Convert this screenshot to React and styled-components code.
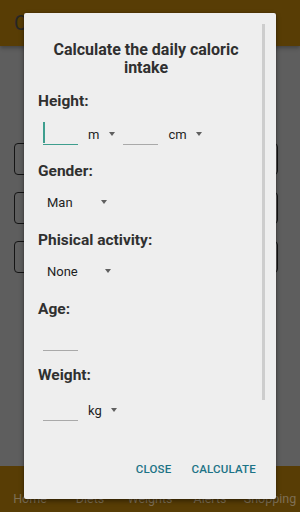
import React from 'react'
import styled, { createGlobalStyle } from 'styled-components'

const GlobalStyle = createGlobalStyle`
  html, body { margin: 0; padding: 0; }
  body { font-family: Roboto, "Noto Sans", sans-serif; background: #5e5e5e; }
  #root { width: 300px; height: 512px; }
`

const Screen = styled.div`
  position: relative;
  width: 300px;
  height: 512px;
  display: flex;
  flex-direction: column;
  background: #5e5e5e;
  overflow: hidden;
`

const AppBar = styled.div`
  height: 46px;
  flex: none;
  display: flex;
  align-items: center;
  padding-left: 14px;
  background: #583d05;
  color: #262626;
  font-size: 20px;
  box-shadow: 0 2px 4px rgba(0, 0, 0, 0.3);
`

const Content = styled.div`
  flex: 1;
  display: flex;
  flex-direction: column;
  gap: 17px;
  padding: 97px 22px 0 14px;
`

const OutlineBox = styled.div`
  height: 30px;
  border: 1.5px solid #151515;
  border-radius: 4px;
`

const BottomNav = styled.div`
  height: 46px;
  flex: none;
  display: grid;
  grid-template-columns: repeat(5, 1fr);
  background: #583d05;
`

const NavItem = styled.div`
  display: flex;
  align-items: flex-end;
  justify-content: center;
  padding-bottom: 6px;
  font-size: 12.5px;
  color: #7e6f55;
`

const Dialog = styled.div`
  position: absolute;
  left: 24px;
  top: 13px;
  width: 252px;
  height: 486px;
  background: #eeeeee;
  border-radius: 2px;
  box-shadow: 0 2px 5px rgba(0, 0, 0, 0.45), 0 0 1px rgba(40, 0, 0, 0.6);
  display: flex;
  flex-direction: column;
`

const ScrollThumb = styled.div`
  position: absolute;
  left: 238px;
  top: 11px;
  width: 3px;
  height: 376px;
  background: #cdcdcd;
`

const Body = styled.div`
  flex: 1;
  padding: 28px 22px 0 14px;
`

const Title = styled.div`
  font-size: 16px;
  line-height: 18px;
  font-weight: 700;
  color: #303030;
  text-align: center;
`

const Label = styled.div`
  margin-top: ${p => p.$top}px;
  font-size: 15.5px;
  line-height: 18px;
  font-weight: 700;
  color: #303030;
`

const Row = styled.div`
  display: flex;
  align-items: flex-start;
  height: 30px;
  margin-top: ${p => p.$top}px;
  padding-left: ${p => p.$indent || 5}px;
`

const Input = styled.div`
  position: relative;
  width: 35px;
  height: 25px;
  border-bottom: 1px solid ${p => (p.$focused ? '#3e9e8e' : '#a9a9a9')};
  flex: none;
`

const Caret = styled.div`
  position: absolute;
  left: 0;
  top: 3px;
  width: 1.5px;
  height: 21px;
  background: #3e9e8e;
`

const Spinner = styled.div`
  display: flex;
  align-items: center;
  height: 30px;
  padding-left: ${p => p.$pad}px;
  font-size: 13px;
  color: #1e1e1e;
`

const Arrow = styled.span`
  margin-left: ${p => p.$gap}px;
  margin-right: 8px;
  width: 0;
  height: 0;
  border-left: 3.5px solid transparent;
  border-right: 3.5px solid transparent;
  border-top: 4.5px solid #5f5f5f;
`

const Actions = styled.div`
  display: flex;
  justify-content: flex-end;
  gap: 4px;
  padding: 0 12px 17px 0;
`

const TextButton = styled.button`
  border: none;
  background: none;
  padding: 6px 8px;
  font-family: Roboto, sans-serif;
  font-size: 11.5px;
  font-weight: 500;
  letter-spacing: 0.2px;
  color: #1c7386;
  text-transform: uppercase;
`

const App = () => {
  return (
    <>
      <GlobalStyle />
      <Screen>
        <AppBar>Calories</AppBar>
        <Content>
          <OutlineBox />
          <OutlineBox />
          <OutlineBox />
        </Content>
        <BottomNav>
          <NavItem>Home</NavItem>
          <NavItem>Diets</NavItem>
          <NavItem>Weights</NavItem>
          <NavItem>Alerts</NavItem>
          <NavItem>Shopping</NavItem>
        </BottomNav>

        <Dialog>
          <ScrollThumb />
          <Body>
            <Title>Calculate the daily caloric<br />intake</Title>

            <Label $top={15}>Height:</Label>
            <Row $top={9}>
              <Input $focused><Caret /></Input>
              <Spinner $pad={10}>m<Arrow $gap={10} /></Spinner>
              <Input />
              <Spinner $pad={10}>cm<Arrow $gap={9} /></Spinner>
            </Row>

            <Label $top={13}>Gender:</Label>
            <Row $top={7} $indent={9}>
              <Spinner $pad={0}>Man<Arrow $gap={28} /></Spinner>
            </Row>

            <Label $top={14}>Phisical activity:</Label>
            <Row $top={7} $indent={9}>
              <Spinner $pad={0}>None<Arrow $gap={27} /></Spinner>
            </Row>

            <Label $top={14}>Age:</Label>
            <Row $top={7}>
              <Input />
            </Row>

            <Label $top={11}>Weight:</Label>
            <Row $top={11}>
              <Input />
              <Spinner $pad={10}>kg<Arrow $gap={9} /></Spinner>
            </Row>
          </Body>
          <Actions>
            <TextButton>Close</TextButton>
            <TextButton>Calculate</TextButton>
          </Actions>
        </Dialog>
      </Screen>
    </>
  )
}

export default App
